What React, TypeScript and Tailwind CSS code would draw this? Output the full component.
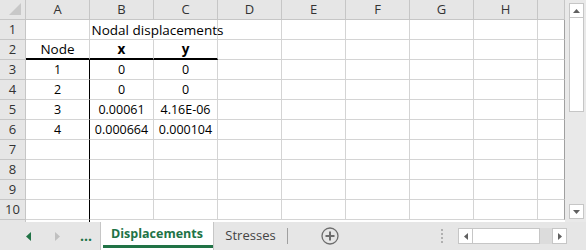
import { clsx } from "clsx";

const COLS = ["A", "B", "C", "D", "E", "F", "G", "H", ""];
const COL_W = [64, 64, 64, 64, 64, 64, 64, 64, 27];

type Cell = { text?: string; bold?: boolean; span?: number; num?: boolean };

// row data, key = row number
const DATA: Record<number, Cell[]> = {
  1: [{}, { text: "Nodal displacements", span: 2 }],
  2: [{ text: "Node" }, { text: "x", bold: true }, { text: "y", bold: true }],
  3: [{ text: "1", num: true }, { text: "0", num: true }, { text: "0", num: true }],
  4: [{ text: "2", num: true }, { text: "0", num: true }, { text: "0", num: true }],
  5: [{ text: "3", num: true }, { text: "0.00061", num: true }, { text: "4.16E-06", num: true }],
  6: [{ text: "4", num: true }, { text: "0.000664", num: true }, { text: "0.000104", num: true }],
};

function HeaderRow() {
  return (
    <div className="flex h-[20px] bg-[#e6e6e6]">
      <div className="w-[26px] h-[20px] border-r border-b border-[#c6c6c6] relative shrink-0">
        <svg width="14" height="14" viewBox="0 0 14 14" className="absolute right-[3px] bottom-[3px]">
          <polygon points="13,1 13,13 1,13" fill="#c8c8c8" />
        </svg>
      </div>
      {COLS.map((c, i) => (
        <div
          key={i}
          style={{ width: COL_W[i] }}
          className="h-[20px] shrink-0 border-r border-b border-[#c6c6c6] flex items-center justify-center text-[13px] text-[#333]"
        >
          {c}
        </div>
      ))}
    </div>
  );
}

function Row({ n }: { n: number }) {
  const cells = DATA[n] ?? [];
  const out: React.ReactNode[] = [];
  let ci = 0;
  let k = 0;
  while (ci < COLS.length) {
    const cell = cells[k] ?? {};
    const span = cell.span ?? 1;
    const w = COL_W.slice(ci, ci + span).reduce((a, b) => a + b, 0);
    const thickBottom = n === 2 && ci <= 2;
    const thickRight = n >= 3 && ci === 0;
    out.push(
      <div
        key={ci}
        style={{ width: w }}
        className={clsx(
          "shrink-0 flex items-center justify-center text-black whitespace-nowrap pt-[1px]",
          cell.num ? "text-[12.5px]" : "text-[13.5px]",
          thickBottom ? "h-[20px] border-b-2 border-b-black" : "h-[20px] border-b border-b-[#d4d4d4]",
          thickRight ? "border-r border-r-black" : ci === COLS.length - 1 ? "border-r border-r-[#a0a0a0]" : "border-r border-r-[#d4d4d4]",
          cell.bold && "font-bold",
          n === 1 && ci === 1 && "pl-[8px]"
        )}
      >
        {cell.text}
      </div>
    );
    ci += span;
    k++;
  }
  return (
    <div className="flex h-[20px]">
      <div className="w-[26px] h-[20px] shrink-0 bg-[#e6e6e6] border-r border-b border-[#c6c6c6] flex items-center justify-center text-[13px] text-[#333]">
        {n}
      </div>
      <div className="flex">{out}</div>
    </div>
  );
}

function VScroll() {
  return (
    <div className="w-[21px] h-[222px] bg-[#e9e9e9] flex flex-col items-center pt-[3px] pl-[1px]">
      <div className="w-[15px] h-[15px] bg-white border border-[#c6c6c6] flex items-center justify-center">
        <svg width="7" height="4" viewBox="0 0 7 4"><polygon points="0,4 7,4 3.5,0" fill="#606060" /></svg>
      </div>
      <div className="w-[15px] h-[94px] bg-white border border-[#c6c6c6] border-t-0" />
      <div className="flex-1" />
      <div className="w-[15px] h-[15px] bg-white border border-[#c6c6c6] flex items-center justify-center mb-[3px]">
        <svg width="7" height="4" viewBox="0 0 7 4"><polygon points="0,0 7,0 3.5,4" fill="#606060" /></svg>
      </div>
    </div>
  );
}

function TabBar() {
  return (
    <div className="h-[28px] bg-[#e6e6e6] flex items-stretch">
      <div className="w-[100px] flex items-center shrink-0">
        <svg width="6" height="9" viewBox="0 0 6 9" className="ml-[26px]"><polygon points="5,0 5,9 0,4.5" fill="#217346" /></svg>
        <svg width="6" height="9" viewBox="0 0 6 9" className="ml-[23px]"><polygon points="0,0 0,9 5,4.5" fill="#c0c0c0" /></svg>
        <span className="ml-[19px] text-[#217346] font-bold text-[14px] leading-[14px]">...</span>
      </div>
      <div className="w-[114px] bg-white border-l border-r border-[#c6c6c6] flex flex-col shrink-0">
        <div className="flex-1 flex items-center justify-center text-[12.5px] font-bold text-[#217346] pt-[1px]">Displacements</div>
        <div className="h-[3px] bg-[#217346] mb-[2px] ml-[2px]" />
      </div>
      <div className="w-[73px] flex items-center justify-center text-[13px] text-[#444] shrink-0">Stresses</div>
      <div className="w-px bg-[#a0a0a0] my-[6px]" />
      <div className="w-[83px] flex items-center justify-center">
        <svg width="18" height="18" viewBox="0 0 18 18">
          <circle cx="9" cy="9" r="8" fill="none" stroke="#6d6d6d" strokeWidth="1.3" />
          <path d="M9 4.5v9M4.5 9h9" stroke="#6d6d6d" strokeWidth="2" />
        </svg>
      </div>
      <div className="w-[63px]" />
      <div className="flex flex-col justify-center gap-[2px] w-[16px] items-center">
        <div className="w-[2px] h-[2px] bg-[#b0b0b0]" />
        <div className="w-[2px] h-[2px] bg-[#b0b0b0]" />
        <div className="w-[2px] h-[2px] bg-[#b0b0b0]" />
        <div className="w-[2px] h-[2px] bg-[#b0b0b0]" />
      </div>
      <div className="flex items-center pl-[8px]">
        <div className="w-[15px] h-[16px] bg-white border border-[#c6c6c6] flex items-center justify-center">
          <svg width="4" height="7" viewBox="0 0 4 7"><polygon points="4,0 4,7 0,3.5" fill="#606060" /></svg>
        </div>
        <div className="w-[67px] h-[16px] bg-white border border-l-0 border-[#c6c6c6]" />
        <div className="w-[12px] h-[16px] bg-[#dcdcdc]" />
        <div className="w-[15px] h-[16px] bg-white border border-[#c6c6c6] flex items-center justify-center">
          <svg width="4" height="7" viewBox="0 0 4 7"><polygon points="0,0 0,7 4,3.5" fill="#606060" /></svg>
        </div>
      </div>
    </div>
  );
}

export default function App() {
  return (
    <div
      className="w-[586px] h-[250px] overflow-hidden bg-white flex flex-col"
      style={{ fontFamily: "'Open Sans', 'Liberation Sans', sans-serif" }}
    >
      <div className="flex h-[222px] shrink-0">
        <div className="w-[565px] h-[222px] overflow-hidden">
          <HeaderRow />
          {Array.from({ length: 10 }, (_, i) => (
            <Row key={i} n={i + 1} />
          ))}
          <div className="flex h-[2px]">
            <div className="w-[26px] bg-[#e6e6e6] border-r border-[#c6c6c6]" />
            <div className="w-[64px] border-r border-black" />
          </div>
        </div>
        <VScroll />
      </div>
      <TabBar />
    </div>
  );
}
